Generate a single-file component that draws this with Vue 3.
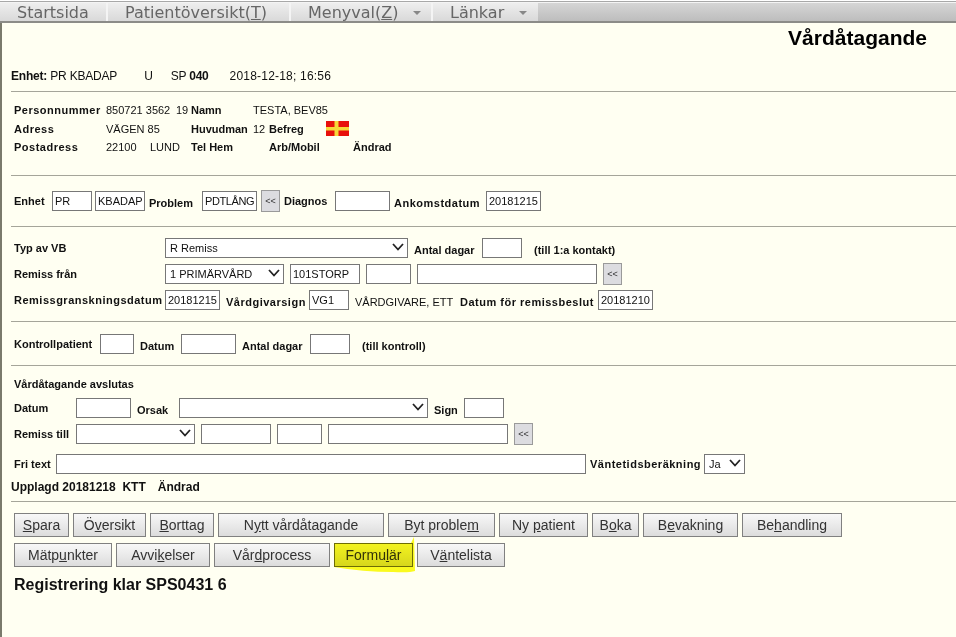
<script setup>
const row1 = [
  { pre: "", key: "S", post: "para", w: 55 },
  { pre: "Ö", key: "v", post: "ersikt", w: 73 },
  { pre: "", key: "B", post: "orttag", w: 64 },
  { pre: "N", key: "y", post: "tt vårdåtagande", w: 166 },
  { pre: "Byt proble", key: "m", post: "", w: 107 },
  { pre: "Ny ", key: "p", post: "atient", w: 89 },
  { pre: "B", key: "o", post: "ka", w: 47 },
  { pre: "B", key: "e", post: "vakning", w: 95 },
  { pre: "Be", key: "h", post: "andling", w: 100 },
];
const row2 = [
  { pre: "Mätp", key: "u", post: "nkter", w: 98 },
  { pre: "Avvi", key: "k", post: "elser", w: 94 },
  { pre: "Vår", key: "d", post: "process", w: 116 },
  { pre: "Formu", key: "l", post: "är", w: 79, marked: true },
  { pre: "V", key: "ä", post: "ntelista", w: 88 },
];
</script>

<template>
  <div class="page">
    <nav class="menu">
      <span class="item" style="width: 108px">Startsida</span>
      <span class="item" style="width: 183px">Patientöversikt(<u>T</u>)</span>
      <span class="item" style="width: 142px"><span>Menyval(<u>Z</u>)</span><i class="caret"></i></span>
      <span class="item" style="width: 105px"><span>Länkar</span><i class="caret"></i></span>
    </nav>

    <main class="content">
      <h1>Vårdåtagande</h1>
      <p class="unit"><b>Enhet:</b> PR KBADAP<span class="u">U</span><span class="sp">SP <b>040</b></span><span class="when">2018-12-18; 16:56</span></p>

      <section class="person">
        <div class="prow">
          <b class="w92 wide">Personnummer</b><span class="w70">850721 3562</span><span class="w15">19</span><b class="w62">Namn</b><span>TESTA, BEV85</span>
        </div>
        <div class="prow">
          <b class="w92 wide">Adress</b><span class="w85">VÄGEN 85</span><b class="w62">Huvudman</b><span class="w16">12</span><b class="w57">Befreg</b>
          <svg class="flag" width="23" height="15" viewBox="0 0 23 15">
            <rect width="23" height="15" fill="#e8100c" />
            <rect x="8.500" width="4" height="15" fill="#f6d83a" />
            <rect y="6" width="23" height="3.500" fill="#f6d83a" />
          </svg>
        </div>
        <div class="prow">
          <b class="w92 wide">Postadress</b><span class="w44">22100</span><span class="w41">LUND</span><b class="w78">Tel Hem</b><b class="w84">Arb/Mobil</b><b>Ändrad</b>
        </div>
      </section>

      <section class="band enhet">
        <div class="row">
          <b class="w38">Enhet</b>
          <input class="fld" style="width: 40px" value="PR" />
          <input class="fld ml3" style="width: 50px" value="KBADAP" />
          <b class="ml4 w53 low">Problem</b>
          <input class="fld tight" style="width: 55px" value="PDTLÅNG" />
          <button class="back ml4">&lt;&lt;</button>
          <b class="ml4 w51">Diagnos</b>
          <input class="fld" style="width: 55px" />
          <b class="ml4 w92 low wide">Ankomstdatum</b>
          <input class="fld" style="width: 55px" value="20181215" />
        </div>
      </section>

      <section class="band vb">
        <div class="row">
          <b class="w151">Typ av VB</b>
          <div class="sel" style="width: 243px">
            <select><option>R Remiss</option></select>
            <svg class="chev" width="12" height="8" viewBox="0 0 12 8"><path d="M1 1l5 5.500L11 1" /></svg>
          </div>
          <b class="ml6 w68 low">Antal dagar</b>
          <input class="fld" style="width: 40px" />
          <b class="ml12 low">(till 1:a kontakt)</b>
        </div>
        <div class="row">
          <b class="w151">Remiss från</b>
          <div class="sel" style="width: 119px">
            <select><option>1 PRIMÄRVÅRD</option></select>
            <svg class="chev" width="12" height="8" viewBox="0 0 12 8"><path d="M1 1l5 5.500L11 1" /></svg>
          </div>
          <input class="fld ml6" style="width: 70px" value="101STORP" />
          <input class="fld ml6" style="width: 45px" />
          <input class="fld ml6" style="width: 180px" />
          <button class="back ml6">&lt;&lt;</button>
        </div>
        <div class="row">
          <b class="w151 wide">Remissgranskningsdatum</b>
          <input class="fld" style="width: 55px" value="20181215" />
          <b class="ml6 w83 low wide">Vårdgivarsign</b>
          <input class="fld" style="width: 40px" value="VG1" />
          <span class="ml6 w105 low">VÅRDGIVARE, ETT</span>
          <b class="w138 low wide">Datum för remissbeslut</b>
          <input class="fld" style="width: 55px" value="20181210" />
        </div>
      </section>

      <section class="band kontroll">
        <div class="row">
          <b class="w86">Kontrollpatient</b>
          <input class="fld" style="width: 34px" />
          <b class="ml6 w41 low">Datum</b>
          <input class="fld" style="width: 55px" />
          <b class="ml6 w68 low">Antal dagar</b>
          <input class="fld" style="width: 40px" />
          <b class="ml12 low">(till kontroll)</b>
        </div>
      </section>

      <section class="band avslut">
        <b class="head">Vårdåtagande avslutas</b>
        <div class="row">
          <b class="w62">Datum</b>
          <input class="fld" style="width: 55px" />
          <b class="ml6 w42 low">Orsak</b>
          <div class="sel" style="width: 249px">
            <select><option></option></select>
            <svg class="chev" width="12" height="8" viewBox="0 0 12 8"><path d="M1 1l5 5.500L11 1" /></svg>
          </div>
          <b class="ml6 w30 low">Sign</b>
          <input class="fld" style="width: 40px" />
        </div>
        <div class="row">
          <b class="w62">Remiss till</b>
          <div class="sel" style="width: 119px">
            <select><option></option></select>
            <svg class="chev" width="12" height="8" viewBox="0 0 12 8"><path d="M1 1l5 5.500L11 1" /></svg>
          </div>
          <input class="fld ml6" style="width: 70px" />
          <input class="fld ml6" style="width: 45px" />
          <input class="fld ml6" style="width: 180px" />
          <button class="back ml6">&lt;&lt;</button>
        </div>
        <div class="row free">
          <b class="w42">Fri text</b>
          <input class="fld" style="width: 530px" />
          <b class="ml4 w114 wide">Väntetidsberäkning</b>
          <div class="sel" style="width: 41px">
            <select><option>Ja</option></select>
            <svg class="chev" width="12" height="8" viewBox="0 0 12 8"><path d="M1 1l5 5.500L11 1" /></svg>
          </div>
        </div>
        <p class="made"><b>Upplagd 20181218&nbsp; KTT</b><b class="changed">Ändrad</b></p>
      </section>

      <section class="band actions">
        <div class="btns">
          <button v-for="b in row1" :key="b.pre + b.key" class="act" :style="{ width: b.w + 'px' }">{{ b.pre }}<u>{{ b.key }}</u>{{ b.post }}</button>
        </div>
        <div class="btns">
          <button v-for="b in row2" :key="b.pre + b.key" class="act" :class="{ marked: b.marked }" :style="{ width: b.w + 'px' }">{{ b.pre }}<u>{{ b.key }}</u>{{ b.post }}</button>
        </div>
        <p class="status">Registrering klar SPS0431 6</p>
        <svg class="marker" width="84" height="36" viewBox="0 0 84 36">
          <path d="M1 6L78 6Q80 2 81 0L82 34Q76 36 60 35Q30 35 1 30Z" fill="#fafa20" />
        </svg>
      </section>
    </main>
  </div>
</template>

<style scoped>
.page {
  width: 956px;
  height: 637px;
  overflow: hidden;
  background: #fffff2;
  font-family: "Liberation Sans", Arial, sans-serif;
  font-size: 11px;
  color: #111;
  display: flex;
  flex-direction: column;
}

.menu {
  height: 23px;
  flex: none;
  box-sizing: border-box;
  display: flex;
  border-top: 1px solid #fff;
  border-bottom: 2px solid #8c8c88;
  box-shadow: inset 0 1px 0 #a8a8a8, inset 0 2px 0 #f4f4f4;
  background: linear-gradient(to bottom, #d8d8d8, #bdbdbd);
  font-family: "DejaVu Sans", Verdana, sans-serif;
  font-size: 16px;
  color: #666;
}

.item {
  display: flex;
  align-items: center;
  box-sizing: border-box;
  padding-left: 17px;
  margin-top: 2px;
  border-right: 2px solid #f4f4f4;
  background: linear-gradient(to bottom, #eeeeee, #d9d9d9);
  white-space: pre;
}

.item:last-child {
  border-right: 0;
}

.caret {
  width: 0;
  height: 0;
  border: 4px solid transparent;
  border-top-color: #888;
  border-bottom: 0;
  margin-top: 2px;
  margin-left: 15px;
}

.content {
  flex: 1;
  position: relative;
  border-left: 2px solid #7a7a6c;
  padding-left: 9px;
}

h1 {
  margin: 0;
  font-size: 21px;
  line-height: 24px;
  padding-top: 3px;
  padding-right: 29px;
  text-align: right;
  color: #000;
}

.unit {
  margin: 19px 0 0;
  line-height: 14px;
  font-size: 12px;
  padding-bottom: 8px;
  border-bottom: 1px solid #a5a59a;
  letter-spacing: -0.2px;
}

.u {
  margin-left: 27px;
}

.sp {
  margin-left: 18px;
}

.when {
  margin-left: 21px;
  letter-spacing: 0.2px;
}

.person {
  padding: 9px 0 0 3px;
  height: 74px;
  border-bottom: 1px solid #a5a59a;
}

.prow {
  display: flex;
  height: 18.500px;
  align-items: center;
  white-space: nowrap;
}

.wide {
  letter-spacing: 0.5px;
}

.band {
  padding-left: 3px;
  border-bottom: 1px solid #a5a59a;
  box-sizing: border-box;
}

.enhet {
  height: 51px;
  padding-top: 15px;
}

.vb {
  height: 95px;
  padding-top: 11px;
}

.kontroll {
  height: 44px;
  padding-top: 12px;
}

.avslut {
  height: 136px;
  padding-top: 11px;
}

.actions {
  border-bottom: 0;
  padding-top: 11px;
  position: relative;
}

.row {
  display: flex;
  align-items: center;
  height: 20px;
  margin-bottom: 6px;
  white-space: nowrap;
}

.head {
  display: block;
  line-height: 14px;
  margin-bottom: 7px;
}

.free {
  margin-top: 10px;
  margin-bottom: 6px;
}

.made {
  margin: 0 0 0 -3px;
  line-height: 14px;
  font-size: 12px;
}

.changed {
  margin-left: 12px;
}

.low {
  padding-top: 3px;
}

.fld {
  box-sizing: border-box;
  height: 20px;
  flex: none;
  border: 1px solid #777;
  background: #fff;
  padding: 0 2px;
  margin: 0;
  font: 11px "Liberation Sans", Arial, sans-serif;
  color: #111;
  border-radius: 0;
  outline: none;
}

.tight {
  letter-spacing: -0.4px;
}

.sel {
  position: relative;
  height: 20px;
  flex: none;
}

.sel select {
  appearance: none;
  box-sizing: border-box;
  width: 100%;
  height: 20px;
  border: 1px solid #777;
  background: #fff;
  padding: 0 4px;
  margin: 0;
  border-radius: 0;
  font: 11px "Liberation Sans", Arial, sans-serif;
  color: #111;
}

.chev {
  position: absolute;
  right: 4px;
  top: 5px;
  pointer-events: none;
}

.chev path {
  fill: none;
  stroke: #222;
  stroke-width: 1.800;
}

.back {
  box-sizing: border-box;
  width: 19px;
  height: 22px;
  flex: none;
  padding: 0;
  border: 1px solid #9a9a9a;
  background: #dcdce0;
  font: 9px "Liberation Sans", Arial, sans-serif;
  color: #333;
  border-radius: 0;
}

.btns {
  display: flex;
  gap: 4px;
  margin-bottom: 6px;
}

.act {
  box-sizing: border-box;
  height: 24px;
  flex: none;
  padding: 0;
  border: 1px solid #808080;
  border-radius: 0;
  background: linear-gradient(to bottom, #f8f8f8, #dcdcdc);
  font: 14px "Liberation Sans", Arial, sans-serif;
  color: #333;
  white-space: pre;
}

.act.marked {
  border-color: #6f6f20;
}

.status {
  margin: 9px 0 0;
  font-size: 16px;
  line-height: 18px;
  font-weight: 700;
  color: #111;
}

.marker {
  position: absolute;
  left: 322px;
  top: 35px;
  mix-blend-mode: multiply;
  pointer-events: none;
}

.w15 { width: 15px; }
.w16 { width: 16px; }
.w30 { width: 30px; }
.w38 { width: 38px; }
.w41 { width: 41px; }
.w42 { width: 42px; }
.w44 { width: 44px; }
.w51 { width: 51px; }
.w53 { width: 53px; }
.w57 { width: 57px; }
.w62 { width: 62px; }
.w68 { width: 68px; }
.w70 { width: 70px; }
.w78 { width: 78px; }
.w83 { width: 83px; }
.w84 { width: 84px; }
.w85 { width: 85px; }
.w86 { width: 86px; }
.w92 { width: 92px; }
.w105 { width: 105px; }
.w114 { width: 114px; }
.w138 { width: 138px; }
.w151 { width: 151px; }
.ml3 { margin-left: 3px; }
.ml4 { margin-left: 4px; }
.ml6 { margin-left: 6px; }
.ml12 { margin-left: 12px; }
</style>
